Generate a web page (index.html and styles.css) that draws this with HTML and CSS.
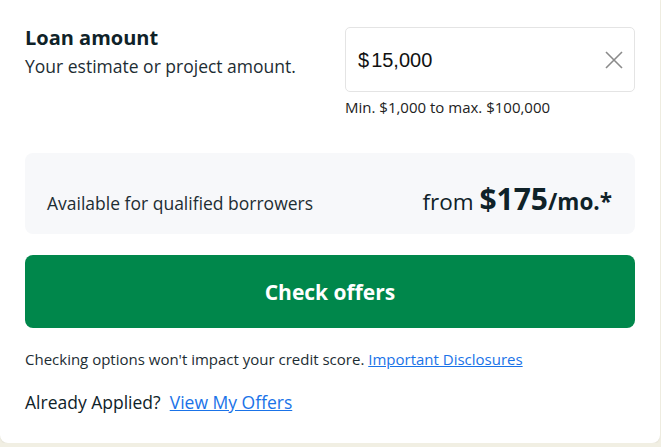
FILE: index.html
```html
<!DOCTYPE html>
<html lang="en">
<head>
  <meta charset="UTF-8">
  <meta name="viewport" content="width=device-width, initial-scale=1.0">
  <title>Loan amount</title>
  <link rel="stylesheet" href="styles.css">
</head>
<body>
  <div class="card">
    <!-- Loan amount field -->
    <div class="amount-row">
      <div class="amount-label">
        <h2>Loan amount</h2>
        <p>Your estimate or project amount.</p>
      </div>
      <div class="amount-field">
        <div class="input-box">
          <span class="input-value">$<span class="num">15,000</span></span>
          <button class="clear-btn" aria-label="Clear">
            <svg width="18" height="18" viewBox="0 0 18 18">
              <path d="M1 1 L17 17 M17 1 L1 17" stroke="#8a8a8a" stroke-width="1.6" fill="none"/>
            </svg>
          </button>
        </div>
        <p class="hint">Min. $1,000 to max. $100,000</p>
      </div>
    </div>

    <!-- Estimated payment -->
    <div class="estimate">
      <span class="estimate-label">Available for qualified borrowers</span>
      <span class="estimate-price">from <strong class="big">$175</strong><strong>/mo.*</strong></span>
    </div>

    <button class="check-btn">Check offers</button>

    <p class="disclaimer">Checking options won't impact your credit score. <a href="#">Important Disclosures</a></p>
    <p class="applied">Already Applied?&nbsp; <a href="#">View My Offers</a></p>
  </div>
</body>
</html>
```

FILE: styles.css
```css
* {
  margin: 0;
  padding: 0;
  box-sizing: border-box;
}
body {
  font-family: "Open Sans", Arial, sans-serif;
  background: #f1efe3;
  color: #0f2228;
}

.card {
  width: 660px;
  height: 443px;
  background: #fff;
  border-radius: 0 0 8px 8px;
  padding: 27px 25px 0 25px;
  box-shadow: 0 1px 2px rgba(0, 0, 0, 0.06);
}

/* Loan amount row */
.amount-row {
  display: flex;
}
.amount-label {
  width: 320px;
}
.amount-label h2 {
  font-size: 20px;
  font-weight: 700;
  line-height: 24px;
  margin-top: -1px;
}
.amount-label p {
  font-size: 17.5px;
  line-height: 26px;
  margin-top: 3px;
  color: #1d2d33;
}
.amount-field {
  width: 290px;
}
.input-box {
  height: 65px;
  border: 1px solid #e4e4e4;
  border-radius: 5px;
  display: flex;
  align-items: center;
  justify-content: space-between;
  padding: 1px 11px 0 12px;
}
.input-value {
  font-family: "Liberation Sans", Arial, sans-serif;
  font-size: 20px;
  color: #111;
}
.input-value .num {
  margin-left: 2px;
}
.clear-btn {
  background: none;
  border: none;
  width: 18px;
  height: 18px;
  display: flex;
}
.hint {
  font-size: 15px;
  line-height: 20px;
  margin-top: 5px;
  color: #222;
}

/* Payment estimate panel */
.estimate {
  margin-top: 36px;
  height: 81px;
  background: #f7f8fa;
  border-radius: 8px;
  display: flex;
  align-items: center;
  justify-content: space-between;
  padding: 0 23px 0 22px;
}
.estimate-label {
  font-size: 17.5px;
  margin-top: 18px;
  color: #1d2d33;
}
.estimate-price {
  font-size: 22.5px;
  margin-top: 9px;
}
.estimate-price strong {
  font-weight: 700;
}
.estimate-price .big {
  font-size: 30px;
}

.check-btn {
  display: block;
  width: 100%;
  height: 73px;
  margin-top: 21px;
  background: #00874b;
  color: #fff;
  border: none;
  border-radius: 8px;
  font-family: inherit;
  font-size: 21px;
  font-weight: 700;
}

.disclaimer {
  font-size: 15px;
  margin-top: 21px;
  color: #1d2d33;
}
.applied {
  font-size: 17.5px;
  margin-top: 21px;
}
a {
  color: #1a73e8;
}
```
